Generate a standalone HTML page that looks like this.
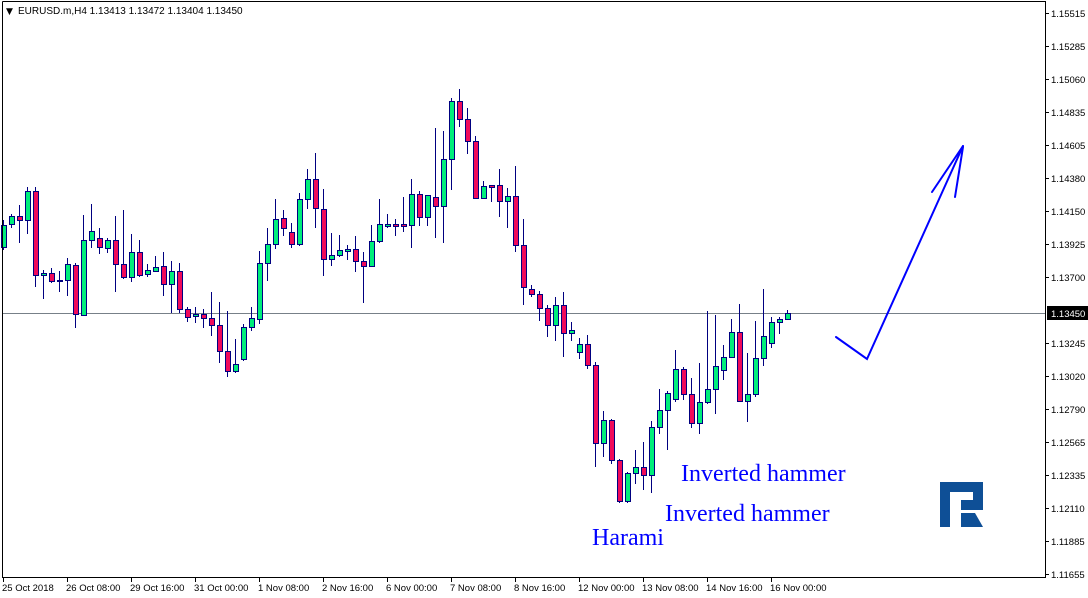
<!DOCTYPE html>
<html><head><meta charset="utf-8"><style>
html,body{margin:0;padding:0;background:#fff;width:1088px;height:598px;overflow:hidden}
svg{display:block}
text{font-family:"Liberation Sans",sans-serif}
</style></head><body>
<svg id="s" width="1088" height="598" viewBox="0 0 1088 598" xmlns="http://www.w3.org/2000/svg" shape-rendering="crispEdges">
<rect x="0" y="0" width="1088" height="598" fill="#fff"/>
<line x1="2" y1="313.5" x2="1045" y2="313.5" stroke="#778088" stroke-width="1"/>
<g id="c"></g>
<path d="M2.5 1.5V577.5H1045.5V1.5H2.5" fill="none" stroke="#000" stroke-width="1"/>
<g fill="#000">
<text x="6" y="14" font-size="9" style="font-family:'DejaVu Sans',sans-serif">▼</text>
<text x="18" y="14" font-size="10">EURUSD.m,H4  1.13413 1.13472 1.13404 1.13450</text>
</g>
<g id="ax" font-size="9.5" fill="#000"></g>
<rect x="1047" y="306" width="41" height="14" fill="#000"/>
<text x="1051" y="317" font-size="9.5" fill="#fff">1.13450</text>
<g fill="none" stroke="#0000ff" stroke-width="2" shape-rendering="auto" stroke-linecap="round">
<path d="M836 337L867 359L963 146"/>
<path d="M963 146L932 192"/>
<path d="M963 147L955 197"/>
</g>
<g font-size="24" fill="#0000ff">
<text x="681" y="481" style="font-family:'Liberation Serif',serif">Inverted hammer</text>
<text x="665" y="521" style="font-family:'Liberation Serif',serif">Inverted hammer</text>
<text x="592" y="545" style="font-family:'Liberation Serif',serif">Harami</text>
</g>
<g shape-rendering="auto">
<path d="M940 482H983V510H961V500H973V492H950V527H940Z" fill="#0e4f96"/>
<path d="M961 513H975L983 527H961Z" fill="#0e4f96"/>
</g>
</svg>
<script>
var d=[[3,220,250,225,247,1],[11,214,228,216,224,1],[19,205,243,216,220,0],[27,187,234,191,220,1],[35,187,287,191,275,0],[43,270,299,273,275,1],[51,268,283,273,281,0],[59,271,292,280,281,0],[67,258,296,264,280,1],[75,263,328,265,314,0],[83,215,315,240,315,1],[91,204,248,231,240,1],[99,228,254,238,247,0],[107,238,253,240,248,1],[115,216,292,240,264,0],[123,210,279,264,277,0],[131,234,282,252,277,1],[139,240,277,252,275,0],[147,264,277,270,274,1],[155,256,272,267,271,1],[163,252,296,266,284,0],[171,261,313,271,284,1],[179,263,313,271,309,0],[187,307,322,309,317,0],[195,307,323,314,316,1],[203,309,328,314,318,0],[211,292,336,318,325,0],[219,302,363,325,351,0],[227,311,377,351,371,0],[235,339,373,364,371,1],[243,324,361,327,359,1],[251,307,331,318,327,1],[259,251,324,263,319,1],[267,228,281,244,263,1],[275,199,249,219,244,1],[283,210,236,218,228,0],[291,223,248,232,244,0],[299,193,246,199,244,1],[307,169,209,179,199,1],[315,153,228,179,208,0],[323,189,276,209,259,0],[331,233,266,255,259,1],[339,235,257,250,255,1],[347,245,260,249,251,1],[355,236,272,249,261,0],[363,252,303,261,266,0],[371,225,267,241,266,1],[379,199,243,224,241,1],[387,214,228,224,226,1],[395,219,236,224,226,0],[403,197,232,224,226,0],[411,179,248,194,225,1],[419,191,226,194,217,0],[427,195,226,195,217,1],[435,128,238,197,206,0],[443,131,243,159,206,1],[451,98,190,101,159,1],[459,89,127,101,119,0],[467,108,154,119,141,0],[475,136,198,141,198,0],[483,181,199,186,198,1],[491,185,202,185,187,0],[499,169,217,185,201,0],[507,188,228,196,201,1],[515,166,252,196,245,0],[523,219,305,245,287,0],[531,285,297,289,294,0],[539,291,321,294,308,0],[547,305,337,308,325,0],[555,297,341,305,325,1],[563,292,357,305,333,0],[571,322,341,330,333,1],[579,338,359,344,352,1],[587,335,369,344,365,0],[595,362,467,365,443,0],[603,411,457,420,443,1],[611,419,464,420,460,0],[619,459,503,460,501,0],[627,472,503,473,501,1],[635,450,484,467,473,1],[643,442,490,467,475,0],[651,421,493,427,475,1],[659,389,434,410,427,1],[667,391,450,393,410,1],[675,350,402,369,399,1],[683,367,400,369,394,0],[691,378,428,394,423,0],[699,363,434,402,423,1],[707,311,404,389,402,1],[715,315,414,366,389,1],[723,345,380,357,370,1],[731,319,358,332,357,1],[739,304,401,332,401,0],[747,353,422,394,401,1],[755,321,397,358,394,1],[763,289,366,336,358,1],[771,317,348,322,343,1],[779,317,334,319,322,1],[787,310,320,313,319,1]];
var g=document.getElementById('c'),h='';
d.forEach(function(c){var x=c[0];
h+='<line x1="'+(x+.5)+'" y1="'+c[1]+'" x2="'+(x+.5)+'" y2="'+c[2]+'" stroke="#000080"/>';
var bh=Math.max(c[4]-c[3],1);
h+='<rect x="'+(x-2+.5)+'" y="'+(c[3]+.5)+'" width="5" height="'+bh+'" fill="'+(c[5]?'#00ee7a':'#f00a5a')+'" stroke="#000080"/>';});
g.innerHTML=h;
var ax=document.getElementById('ax'),a='';
[['1.15515',13],['1.15285',46],['1.15060',79],['1.14835',112],['1.14605',145],['1.14380',178],['1.14150',211],['1.13925',244],['1.13700',277],['1.13245',343],['1.13020',376],['1.12790',409],['1.12565',442],['1.12335',475],['1.12110',508],['1.11885',541],['1.11655',574]].forEach(function(p){
a+='<line x1="1045" y1="'+(p[1]+.5)+'" x2="1049" y2="'+(p[1]+.5)+'" stroke="#000"/><text x="1051" y="'+(p[1]+4)+'">'+p[0]+'</text>';});
['25 Oct 2018','26 Oct 08:00','29 Oct 16:00','31 Oct 00:00','1 Nov 08:00','2 Nov 16:00','6 Nov 00:00','7 Nov 08:00','8 Nov 16:00','12 Nov 00:00','13 Nov 08:00','14 Nov 16:00','16 Nov 00:00'].forEach(function(t,i){var x=3+64*i;
a+='<line x1="'+(x+.5)+'" y1="577" x2="'+(x+.5)+'" y2="582" stroke="#000"/><text x="'+(x-1)+'" y="591">'+t+'</text>';});
ax.innerHTML=a;
</script>
</body></html>
